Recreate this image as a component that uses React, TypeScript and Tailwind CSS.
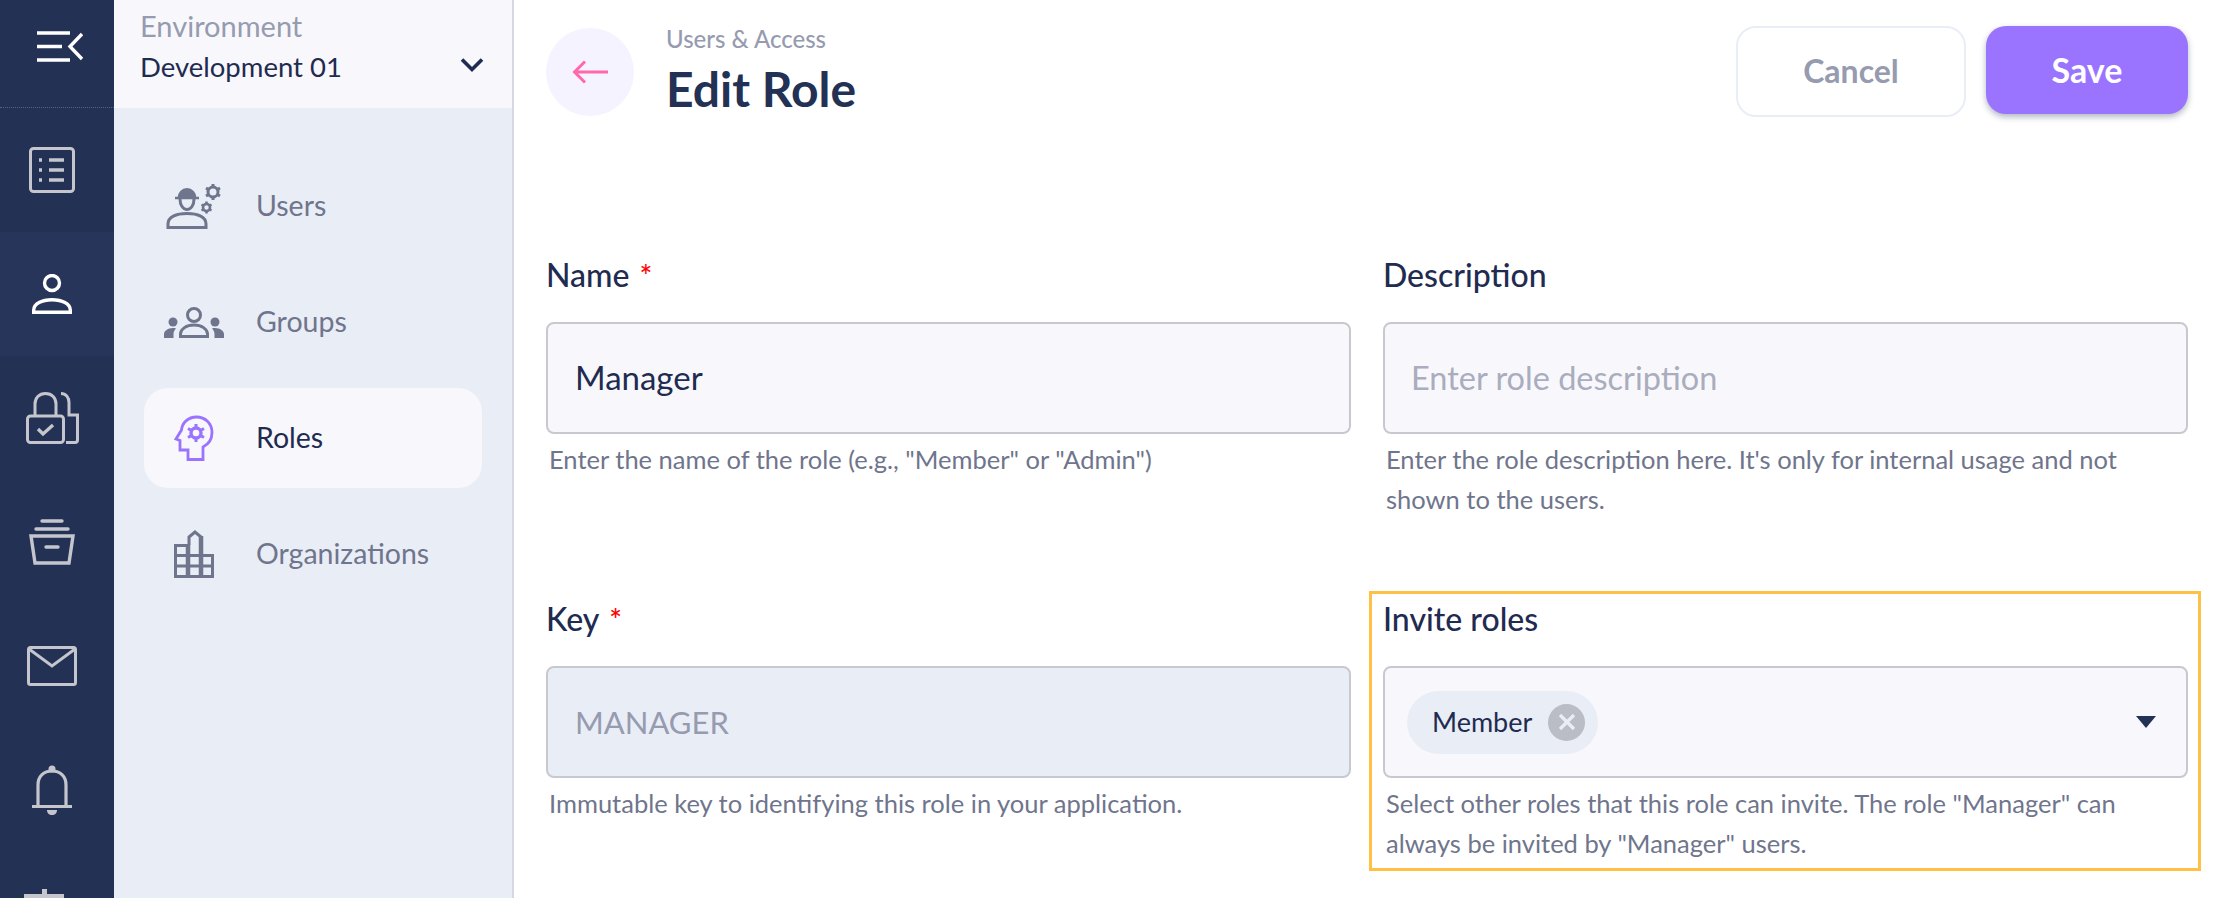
import { ReactNode } from "react";

const font = "font-['Lato','Liberation_Sans',sans-serif]";

const MenuIcon = () => (
  <svg width="46" height="31" viewBox="0 0 46 31" fill="none" stroke="#fff" strokeWidth="3.4">
    <path d="M0 2h33M0 15.500h25M0 29h33M45 3 33 15.500 45 28" />
  </svg>
);

const ListIcon = () => (
  <svg width="46" height="46" viewBox="0 0 46 46" fill="none" stroke="#c5c6cd" strokeWidth="3">
    <rect x="1.5" y="1.5" width="43" height="43" rx="3" />
    <path d="M20 13h15M20 23h15M20 33h15" strokeWidth="3.4" />
    <path d="M10 13h3M10 23h3M10 33h3" strokeWidth="3.4" />
  </svg>
);

const UserIcon = () => (
  <svg width="40" height="40" viewBox="0 0 40 40" fill="none" stroke="#fff" strokeWidth="3.4">
    <circle cx="20" cy="9" r="7.500" />
    <path d="M1.700 38.300V36C1.700 29.500 10 25.700 20 25.700S38.300 29.500 38.300 36v2.300z" />
  </svg>
);

const LockIcon = () => (
  <svg width="53" height="52" viewBox="0 0 53 52" fill="none" stroke="#c5c6cd" strokeWidth="3">
    <rect x="1.5" y="24" width="36" height="26.500" rx="3" />
    <path d="M9 24V12C9 6 13 1.500 19.500 1.500S30 6 30 12v12" />
    <path d="M35 1.500c5 0 8 4 8 9V23h8.500v25c0 1.500-1 2.500-2.500 2.500h-9" />
    <path d="m12 37 5 5 10-9" strokeWidth="3.4" />
  </svg>
);

const ArchiveIcon = () => (
  <svg width="46" height="46" viewBox="0 0 46 46" fill="none" stroke="#c5c6cd" strokeWidth="3.4">
    <path d="M13 2h20M7 10h32" strokeLinecap="round" />
    <path d="M2 17h42l-4 27H6z" />
    <path d="M17 28h12" strokeLinecap="round" />
  </svg>
);

const MailIcon = () => (
  <svg width="50" height="40" viewBox="0 0 50 40" fill="none" stroke="#c5c6cd" strokeWidth="3">
    <rect x="1.5" y="1.500" width="47" height="37" rx="2" />
    <path d="m2 3 23 17L48 3" />
  </svg>
);

const BellIcon = () => (
  <svg width="40" height="50" viewBox="0 0 40 50" fill="none" stroke="#c5c6cd" strokeWidth="3.2">
    <path d="M6 41V20C6 11 12 6 20 6s14 5 14 14v21" />
    <path d="M0 41.500h40" />
    <circle cx="20" cy="4" r="3.500" fill="#c5c6cd" stroke="none" />
    <path d="M15 45h10c0 3-2 5-5 5s-5-2-5-5z" fill="#c5c6cd" stroke="none" />
  </svg>
);

const BottomIcon = () => (
  <svg width="42" height="42" viewBox="0 0 42 42" fill="#c5c6cd" className="-translate-x-[7px] -translate-y-[4px]">
    <rect x="18" y="0" width="5" height="5" />
    <rect x="0" y="5" width="40" height="6" />
  </svg>
);

const UsersGearIcon = () => (
  <svg width="56" height="46" viewBox="0 0 56 46" fill="none" stroke="#6f758c">
    <path d="M2 44.500V41c0-7 8-10.500 19-10.500S40 34 40 41v3.500z" strokeWidth="3" />
    <path d="M11.500 15a9.500 10 0 0 1 19 0z" fill="#6f758c" stroke="none" />
    <path d="M9 15h24" strokeWidth="2.500" />
    <path d="M14 16c0 6 3 10.500 7 10.500S28 22 28 16" strokeWidth="3" />
    <circle cx="47" cy="9" r="5" strokeWidth="3" />
    <path d="M47 1v3M47 14v3M40 5l2.600 1.500M51.400 11.500 54 13M40 13l2.600-1.500M51.400 6.500 54 5" strokeWidth="3" />
    <circle cx="40.500" cy="24.500" r="3.500" strokeWidth="2.600" />
    <path d="M40.500 18.500v2M40.500 28.500v2M35.500 21.500l1.700 1M43.800 26.500l1.700 1M35.500 27.500l1.700-1M43.800 22.500l1.700-1" strokeWidth="2.600" />
  </svg>
);

const GroupsIcon = () => (
  <svg width="60" height="31" viewBox="0 0 60 31" fill="#6f758c">
    <circle cx="30" cy="8" r="6.500" fill="none" stroke="#6f758c" strokeWidth="3" />
    <path d="M16.500 29.500V27c0-5 6-9 13.500-9s13.500 4 13.500 9v2.500z" fill="none" stroke="#6f758c" strokeWidth="3" />
    <circle cx="9" cy="15" r="4.500" />
    <circle cx="51" cy="15" r="4.500" />
    <path d="M0 31v-4c0-3 4-6 9-6 1 0 2 0 3 .4-1.500 1.500-2.500 3.600-2.500 5.600v4z" />
    <path d="M60 31v-4c0-3-4-6-9-6-1 0-2 0-3 .4 1.500 1.500 2.500 3.600 2.500 5.600v4z" />
  </svg>
);

const RolesIcon = () => (
  <svg width="40" height="46" viewBox="0 0 40 46" fill="none" stroke="#9a73ff" strokeWidth="2.800">
    <path d="M14 44.500h15V32c6-3 9-8 9-14.500C38 8 31 2 22.500 2 14 2 8 8 7.500 15L2 24l4 1.500V35h8z" />
    <circle cx="22" cy="18" r="5" strokeWidth="3.400" />
    <path d="M22 9v3M22 24v3M14 13.500l2.600 1.500M27.400 21l2.600 1.500M14 22.500l2.600-1.500M27.400 15l2.600-1.500" strokeWidth="3" />
  </svg>
);

const OrgIcon = () => (
  <svg width="40" height="48" viewBox="0 0 40 48" fill="none" stroke="#6f758c" strokeWidth="3">
    <path d="M15 15V7l6-5 6 5v8" />
    <path d="M1.500 15.500h12M1.500 25.500h37M1.500 36h37M1.500 46.500h37" />
    <path d="M1.500 14v34M38.500 24v24" />
    <path d="M14 14v34M27 6v42" strokeWidth="4.500" />
  </svg>
);

const rail = [
  { icon: <ListIcon /> },
  { icon: <UserIcon />, active: true },
  { icon: <LockIcon /> },
  { icon: <ArchiveIcon /> },
  { icon: <MailIcon /> },
  { icon: <BellIcon /> },
  { icon: <BottomIcon /> },
];

const navItems = [
  { label: "Users", icon: <UsersGearIcon /> },
  { label: "Groups", icon: <GroupsIcon /> },
  { label: "Roles", icon: <RolesIcon />, active: true },
  { label: "Organizations", icon: <OrgIcon /> },
];

const Field = ({ label, required, help, children }: { label: string; required?: boolean; help: string; children: ReactNode }) => (
  <div className="h-[344px]">
    <div className="h-[46px] text-[32px] leading-[46px] font-medium text-[#1f2b50]">
      {label}
      {required && <span className="ml-[10px] text-[30px] text-[#f00]">*</span>}
    </div>
    <div className="mt-[24px]">{children}</div>
    <p className="mt-[5px] px-[3px] pr-[30px] text-[25.500px] leading-[40px] text-[#6f758c]">{help}</p>
  </div>
);

const inputClass = "flex h-[112px] items-center rounded-[8px] border-2 border-[#c8c9d0] px-[27px] text-[33px]";

export default function App() {
  return (
    <div className={`${font} flex h-[898px] w-[2214px] overflow-hidden bg-white`}>
      {/* rail */}
      <aside className="w-[114px] shrink-0 bg-[#233154]">
        <div className="flex h-[108px] items-center justify-center border-b border-dotted border-[#59637f] pb-[14px] pl-[5px]">
          <MenuIcon />
        </div>
        {rail.map((item, i) => (
          <div key={i} className={`flex h-[124px] items-center justify-center pr-[10px] ${item.active ? "bg-[#27355b]" : ""}`}>
            {item.icon}
          </div>
        ))}
      </aside>

      {/* sidebar */}
      <nav className="w-[400px] shrink-0 border-r-2 border-[#d5d8e2] bg-[#e9edf6]">
        <div className="relative h-[108px] bg-[#f8f8fc] pl-[26px] pt-[7px]">
          <div className="text-[29px] leading-[38px] text-[#969bb0]">Environment</div>
          <div className="text-[27.500px] leading-[44px] text-[#1f2b50]">Development 01</div>
          <svg className="absolute right-[28px] top-[57px]" width="24" height="16" viewBox="0 0 24 16" fill="none" stroke="#1f2b50" strokeWidth="3.600">
            <path d="m2 2.500 10 10 10-10" />
          </svg>
        </div>
        <div className="flex flex-col gap-[16px] pl-[30px] pr-[30px] pt-[48px]">
          {navItems.map((n) => (
            <div key={n.label} className={`flex h-[100px] items-center rounded-[24px] ${n.active ? "bg-[#f8f8fc] text-[#1f2b50]" : "text-[#6f758c]"}`}>
              <div className="mr-[12px] flex w-[100px] shrink-0 justify-center">{n.icon}</div>
              <span className="-mt-[2px] text-[28.500px]">{n.label}</span>
            </div>
          ))}
        </div>
      </nav>

      {/* main */}
      <main className="flex-1 pl-[32px] pr-[26px]">
        <header className="flex h-[156px] pt-[26px]">
          <div className="mt-[2px] flex h-[88px] w-[88px] items-center justify-center rounded-full bg-[#f5f3ff]">
            <svg width="36" height="24" viewBox="0 0 36 24" fill="none" stroke="#ff69ab" strokeWidth="3">
              <path d="M36 12H3M13 1.500 2.500 12 13 22.500" />
            </svg>
          </div>
          <div className="ml-[32px]">
            <div className="text-[24px] leading-[26px] font-medium text-[#969bb0]">Users &amp; Access</div>
            <div className="mt-[7px] text-[48px] leading-[60px] font-bold text-[#233154]">Edit Role</div>
          </div>
          <div className="ml-auto flex items-start gap-[20px]">
            <button className="h-[91px] w-[230px] rounded-[20px] border-2 border-[#e9edf6] bg-white pb-[2px] text-[32px] font-bold text-[#969bb0]">Cancel</button>
            <button className="h-[88px] w-[202px] rounded-[20px] bg-[#9a73ff] pb-[2px] text-[34px] font-bold text-white shadow-[0_3px_6px_rgba(35,49,84,0.35)]">Save</button>
          </div>
        </header>

        <div className="mt-[96px] grid grid-cols-2 gap-x-[32px]">
          <Field label="Name" required help={'Enter the name of the role (e.g., "Member" or "Admin")'}>
            <div className={`${inputClass} bg-[#f8f8fc] text-[#1f2b50]`}>Manager</div>
          </Field>
          <Field label="Description" help="Enter the role description here. It's only for internal usage and not shown to the users.">
            <div className={`${inputClass} bg-[#f8f8fc] !pl-[26px] !text-[32.500px] text-[#a9adbd]`}>Enter role description</div>
          </Field>
          <Field label="Key" required help="Immutable key to identifying this role in your application.">
            <div className={`${inputClass} bg-[#e9edf6] !text-[31px] text-[#969bb0]`}>MANAGER</div>
          </Field>
          <div className="relative">
            <Field label="Invite roles" help={'Select other roles that this role can invite. The role "Manager" can always be invited by "Manager" users.'}>
              <div className={`${inputClass} justify-between bg-[#f8f8fc] !px-[22px] text-[#1f2b50]`}>
                <div className="flex h-[63px] items-center gap-[16px] rounded-full bg-[#e9edf6] pl-[25px] pr-[13px] text-[27px]">
                  Member
                  <span className="flex h-[37px] w-[37px] items-center justify-center rounded-full bg-[#babcc6]">
                    <svg width="20" height="20" viewBox="0 0 20 20" stroke="#e9edf6" strokeWidth="3.200">
                      <path d="m3 3 14 14M17 3 3 17" />
                    </svg>
                  </span>
                </div>
                <svg className="mr-[8px]" width="20" height="12" viewBox="0 0 20 12" fill="#233154">
                  <path d="M0 0h20L10 12z" />
                </svg>
              </div>
            </Field>
            <div className="pointer-events-none absolute -left-[14px] -right-[13px] -top-[5px] h-[280px] border-[3px] border-[#ffc145]" />
          </div>
        </div>
      </main>
    </div>
  );
}
